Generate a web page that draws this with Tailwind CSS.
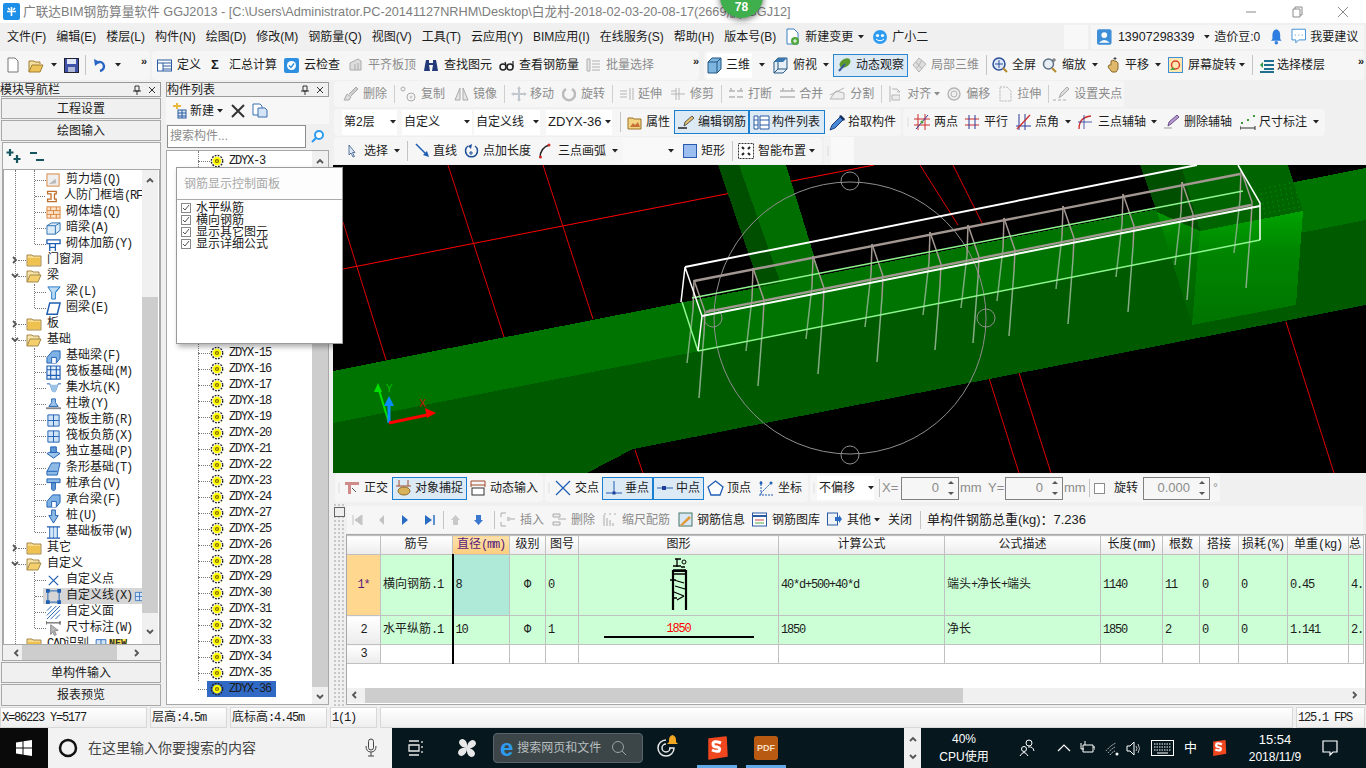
<!DOCTYPE html>
<html lang="zh-CN">
<head>
<meta charset="UTF-8">
<title>广联达BIM钢筋算量软件 GGJ2013</title>
<script src="https://cdn.jsdelivr.net/npm/@tailwindcss/browser@4"></script>
</head>
<body class="overflow-hidden">

<!-- shared icons -->
<svg class="absolute w-0 h-0">
  <symbol id="caret" viewBox="0 0 6 4"><path d="M0 0h6L3 3.5z" fill="#222"/></symbol>
  <symbol id="gear" viewBox="0 0 16 16"><circle cx="8" cy="8" r="6.500" fill="none" stroke="#222" stroke-width="1.600" stroke-dasharray="2 1.400"/><circle cx="8" cy="8" r="5" fill="#ff0"/><circle cx="8" cy="8" r="2.400" fill="#7a6a00"/><circle cx="8" cy="8" r="1" fill="#ff0"/></symbol>
  <symbol id="fold" viewBox="0 0 16 14"><path d="M1 3V2h5l1 1h8v10H1z" fill="#f6d98a" stroke="#a5894a"/><path d="M2 5h12v7H2z" fill="#efc14e"/></symbol>
  <symbol id="foldo" viewBox="0 0 16 14"><path d="M1 13V2h5l1 1h6v3" fill="#f6e3a8" stroke="#a5894a"/><path d="M1 13l3-7h11l-3 7z" fill="#f3cf6e" stroke="#a5894a"/></symbol>
  <symbol id="up" viewBox="0 0 10 10"><path d="M2 7l3-3 3 3" fill="none" stroke="#555" stroke-width="1.800"/></symbol>
  <symbol id="down" viewBox="0 0 10 10"><path d="M2 3l3 3 3-3" fill="none" stroke="#555" stroke-width="1.800"/></symbol>
  <symbol id="left" viewBox="0 0 10 10"><path d="M7 2L4 5l3 3" fill="none" stroke="#555" stroke-width="1.800"/></symbol>
  <symbol id="right" viewBox="0 0 10 10"><path d="M3 2l3 3-3 3" fill="none" stroke="#555" stroke-width="1.800"/></symbol>
  <symbol id="grip" viewBox="0 0 4 20"><path d="M1 1h2v2H1zM1 5h2v2H1zM1 9h2v2H1zM1 13h2v2H1zM1 17h2v2H1z" fill="#c4c4c4"/></symbol>
  <symbol id="spin" viewBox="0 0 10 20"><path d="M2 6l3-3 3 3z" fill="#555"/><path d="M2 14h6l-3 3z" fill="#555"/></symbol>
  <symbol id="blue" viewBox="0 0 16 16"><path d="M2 2h12v12H2z" fill="#cfe2f6" stroke="#1f5fb4"/><path d="M2 8h12M8 2v12" stroke="#1f5fb4"/></symbol>
  <g id="st"><path d="M0 0L-1 30" fill="none" stroke="#a39791" stroke-width="1.500"/><path d="M-1 30L-7 83" fill="none" stroke="#7cab7c" stroke-width="1.500"/><path d="M0 0L11 32L10 53" fill="none" stroke="#a39791" stroke-width="1.500"/><path d="M10 53L5 118" fill="none" stroke="#86ad86" stroke-width="1.500"/></g>
</svg>

<div class="relative w-[1366px] h-[768px] overflow-hidden bg-[#f0f0f0] text-[12px] leading-4 text-[#1c1c1c] font-['Liberation_Sans','Noto_Sans_CJK_SC',sans-serif]">

  <!-- title bar -->
  <div class="flex items-center h-[23px] bg-white pl-[3px]">
    <svg width="17" height="17" viewBox="0 0 17 17"><rect width="17" height="17" rx="2" fill="#1e8fe8"/><path d="M4 8.500h9M8.500 4v9M5 5l2 2M12 5l-2 2" stroke="#fff" stroke-width="1.600"/></svg>
    <span class="ml-[3px] whitespace-nowrap text-[12.7px] text-[#7d7d7d]">广联达BIM钢筋算量软件 GGJ2013 - [C:\Users\Administrator.PC-20141127NRHM\Desktop\白龙村-2018-02-03-20-08-17(2669版).GGJ12]</span>
    <div class="ml-auto flex items-center">
      <svg width="46" height="16" viewBox="0 0 46 16"><path d="M18 8h10" stroke="#8a8a8a"/></svg>
      <svg width="46" height="16" viewBox="0 0 46 16"><path d="M19 5h7v8h-7zM21 5V3h7v8h-2" fill="none" stroke="#8a8a8a"/></svg>
      <svg width="46" height="16" viewBox="0 0 46 16"><path d="M18 3l10 10M28 3L18 13" stroke="#8a8a8a"/></svg>
    </div>
  </div>
  <!-- badge over the title -->
  <div class="absolute left-[720px] top-[-25px] w-[43px] h-[43px] rounded-full bg-[#3fae4c] shadow-[0_2px_6px_rgba(0,0,0,0.55)] flex items-end justify-center pb-[3px] text-white font-bold text-[12px]">78</div>

  <!-- menu bar -->
  <div class="flex items-center h-[27px] whitespace-nowrap">
    <div class="flex items-center gap-[10px] pl-[7px]">
      <span>文件(F)</span><span>编辑(E)</span><span>楼层(L)</span><span>构件(N)</span><span>绘图(D)</span><span>修改(M)</span><span>钢筋量(Q)</span><span>视图(V)</span><span>工具(T)</span><span>云应用(Y)</span><span>BIM应用(I)</span><span>在线服务(S)</span><span>帮助(H)</span><span>版本号(B)</span>
    </div>
    <svg class="ml-[9px]" width="15" height="18" viewBox="0 0 15 18"><path d="M2 1h7l4 4v11H2z" fill="#fff" stroke="#3a7fc4"/><circle cx="10" cy="13" r="4" fill="#4fa83d"/><path d="M10 11v4M8 13h4" stroke="#fff"/></svg>
    <span class="ml-[5px]">新建变更</span>
    <svg class="ml-[5px]" width="6" height="4"><use href="#caret"/></svg>
    <svg class="ml-[8px]" width="16" height="16" viewBox="0 0 16 16"><circle cx="8" cy="8" r="7" fill="#2d9cf0"/><circle cx="5.500" cy="6.500" r="1.600" fill="#fff"/><circle cx="10.500" cy="6.500" r="1.600" fill="#fff"/><path d="M4 10q4 3.500 8 0" stroke="#fff" fill="none"/></svg>
    <span class="ml-[4px]">广小二</span>
    <div class="ml-[136px] w-[24px] h-[24px] bg-[#f8f8f8]"></div>
    <div class="flex items-center h-[24px] ml-[3px] pl-[6px] pr-[6px] gap-[6px] bg-[#f6f6f6] w-[273px]">
      <svg width="15" height="16" viewBox="0 0 15 16"><rect width="15" height="16" rx="2" fill="#3f8fd8"/><circle cx="7.500" cy="6" r="3" fill="#fff"/><path d="M2 14q5.500-6 11 0z" fill="#fff"/></svg>
      <span class="text-[12.500px]">13907298339</span>
      <svg class="ml-[4px]" width="6" height="4"><use href="#caret"/></svg>
      <span class="-ml-[2px]">造价豆:0</span>
      <svg class="ml-[4px]" width="13" height="17" viewBox="0 0 13 17"><path d="M6.500 1q-4 1-4 6v4L1 13h11l-1.500-2V7q0-5-4-6z" fill="#2e7fe0"/><circle cx="6.500" cy="15" r="1.800" fill="#2e7fe0"/></svg>
      <svg class="ml-[2px]" width="16" height="17" viewBox="0 0 16 17"><path d="M1 1h14v11H8l-3 3v-3H1z" fill="#fff" stroke="#3f8fd8"/><path d="M4 7h1M7.500 7h1M11 7h1" stroke="#3f8fd8"/></svg>
      <span class="-ml-[2px]">我要建议</span>
    </div>
  </div>

  <!-- main toolbar -->
  <div class="flex items-center h-[30px] whitespace-nowrap">
    <div class="flex items-center h-[29px] w-[150px] bg-[#f6f6f6] rounded-r-sm pl-[7px]">
      <svg width="12" height="16" viewBox="0 0 12 16"><path d="M1 1h7l3 3v11H1z" fill="#fff" stroke="#777"/></svg>
      <svg class="ml-[9px]" width="16" height="15" viewBox="0 0 16 15"><path d="M1 14V3h5l1 1h5v2" fill="#f3dfa0" stroke="#a07f30"/><path d="M1 14l3-7h11l-3 7z" fill="#eec35a" stroke="#a07f30"/></svg>
      <svg class="ml-[7px]" width="6" height="4"><use href="#caret"/></svg>
      <svg class="ml-[7px]" width="15" height="15" viewBox="0 0 15 15"><rect x=".5" y=".5" width="14" height="14" fill="#3d52a8" stroke="#223"/><rect x="3" y="1" width="9" height="5" fill="#dfe6f5"/><rect x="4" y="9" width="7" height="5" fill="#aeb8d8"/></svg>
      <i class="ml-[6px] w-px h-[20px] bg-[#c4c4c4]"></i>
      <svg class="ml-[7px]" width="13" height="15" viewBox="0 0 13 15"><path d="M3 5q7-3 8 3 0 4-4 5" fill="none" stroke="#2766c4" stroke-width="2.400"/><path d="M1 1l1 7 5-4z" fill="#2766c4"/></svg>
      <svg class="ml-[9px]" width="6" height="4"><use href="#caret"/></svg>
      <span class="ml-[20px] -mt-[8px] text-[11px] font-bold leading-none">»</span>
    </div>
    <div class="flex items-center h-[29px] w-[547px] ml-[2px] gap-[7px] bg-[#f6f6f6] rounded-sm pl-[5px]">
      <div class="flex items-center gap-[5px]"><svg width="15" height="15" viewBox="0 0 15 15"><rect x=".5" y="2" width="14" height="11" fill="#fff" stroke="#2a5aa0"/><path d="M1 5h13M6 5v8M6 8h8M6 11h8" stroke="#2a5aa0"/></svg><span>定义</span></div>
      <div class="flex items-center gap-[9px] ml-[3px]"><span class="font-bold text-[13px] w-[9px]">Σ</span><span>汇总计算</span></div>
      <div class="flex items-center gap-[5px]"><svg width="15" height="15" viewBox="0 0 15 15"><rect width="15" height="15" rx="2" fill="#2d8fe0"/><circle cx="7.500" cy="7.500" r="4.500" fill="#fff"/><path d="M5 7.500l2 2 3-4" fill="none" stroke="#2d8fe0" stroke-width="1.400"/></svg><span>云检查</span></div>
      <div class="flex items-center gap-[5px] text-[#8c8c8c] ml-[1px]"><svg width="15" height="16" viewBox="0 0 15 16"><path d="M2 6l8-4 3 2v9H2z" fill="#ddd" stroke="#aaa"/><path d="M7 7v6M10 6v7" stroke="#aaa"/></svg><span>平齐板顶</span></div>
      <div class="flex items-center gap-[5px]"><svg width="16" height="15" viewBox="0 0 16 15"><path d="M3 2h3v5l1 6H1l1-6zM10 2h3l1 5 1 6H9l1-6z" fill="#223a78"/><path d="M6 6h4" stroke="#223a78" stroke-width="2"/></svg><span>查找图元</span></div>
      <div class="flex items-center gap-[5px]"><svg width="15" height="15" viewBox="0 0 15 15"><circle cx="4" cy="9" r="3" fill="none" stroke="#222" stroke-width="1.500"/><circle cx="11" cy="9" r="3" fill="none" stroke="#222" stroke-width="1.500"/><path d="M6 4l1 3M14 3v6" stroke="#222" stroke-width="1.200"/></svg><span>查看钢筋量</span></div>
      <div class="flex items-center gap-[5px] text-[#8c8c8c]"><svg width="15" height="16" viewBox="0 0 15 16"><path d="M1 2h3v12H1zM6 4h8M6 7h8M6 10h8M6 13h8" fill="#e5e5e5" stroke="#b0b0b0"/></svg><span>批量选择</span></div>
      <span class="ml-[32px] -mt-[8px] text-[11px] font-bold leading-none">»</span>
    </div>
    <div class="flex items-center h-[29px] w-[660px] ml-[5px] bg-[#f6f6f6] rounded-sm pl-[3px]">
      <div class="flex items-center h-[25px] gap-[4px] bg-white pr-[2px]"><svg width="15" height="17" viewBox="0 0 15 17"><path d="M1 5l4-4h9v11l-4 4H1z" fill="#7cb6e0" stroke="#24557f"/><path d="M1 5h9v11M10 5l4-4" fill="none" stroke="#24557f"/></svg><span>三维</span></div>
      <svg class="ml-[7px]" width="6" height="4"><use href="#caret"/></svg>
      <svg class="ml-[8px]" width="15" height="17" viewBox="0 0 15 17"><path d="M1 5l4-4h9v11l-4 4H1z" fill="#e6eff7" stroke="#24557f"/><path d="M5 1v11h9M5 12l-4 4" fill="none" stroke="#24557f"/><path d="M1 5l4-4h9l-4 4z" fill="#3a78b0"/></svg>
      <span class="ml-[5px]">俯视</span>
      <svg class="ml-[6px]" width="6" height="4"><use href="#caret"/></svg>
      <div class="flex items-center h-[23px] w-[75px] ml-[4px] pl-[3px] gap-[4px] border border-[#2b86d3] bg-[#dceaf6]"><svg width="15" height="16" viewBox="0 0 15 16"><ellipse cx="8" cy="6" rx="6" ry="4" fill="#5c9a2e" transform="rotate(-35 8 6)"/><path d="M2 14L8 7" stroke="#3a5a9a" stroke-width="2"/></svg><span>动态观察</span></div>
      <div class="flex items-center gap-[4px] ml-[4px] text-[#8c8c8c]"><svg width="15" height="16" viewBox="0 0 15 16"><path d="M7 1l7 6-7 8-6-7z" fill="#ddd" stroke="#b5b5b5"/><path d="M4 5l6 7M10 3L5 11" stroke="#b5b5b5"/></svg><span>局部三维</span></div>
      <i class="ml-[7px] w-px h-[20px] bg-[#c4c4c4]"></i>
      <svg class="ml-[5px]" width="16" height="17" viewBox="0 0 16 17"><circle cx="7" cy="7" r="6" fill="#dfe8f7" stroke="#2a4f98" stroke-width="1.500"/><path d="M7 3v8M3 7h8" stroke="#2a4f98"/><path d="M11 11l4 4" stroke="#b58a2e" stroke-width="2"/></svg>
      <span class="ml-[4px]">全屏</span>
      <svg class="ml-[6px]" width="15" height="16" viewBox="0 0 15 16"><circle cx="6.500" cy="7" r="5" fill="#e8eef5" stroke="#5f7187" stroke-width="1.500"/><path d="M10 11l4 4" stroke="#b58a2e" stroke-width="2"/><path d="M12 1v4M10 3h4" stroke="#666"/></svg>
      <span class="ml-[5px]">缩放</span>
      <svg class="ml-[6px]" width="6" height="4"><use href="#caret"/></svg>
      <svg class="ml-[8px]" width="15" height="16" viewBox="0 0 15 16"><path d="M5 8V4l2-1 1 1 2 0 2 2v6l-2 3H6L2 10l1-2z" fill="#e0b86c" stroke="#8a6a2a"/><path d="M9 0v3M7.500 1.500h3" stroke="#444"/></svg>
      <span class="ml-[4px]">平移</span>
      <svg class="ml-[6px]" width="6" height="4"><use href="#caret"/></svg>
      <svg class="ml-[7px]" width="15" height="16" viewBox="0 0 15 16"><rect x=".5" y=".5" width="14" height="15" fill="#ffe7b0" stroke="#3f8fd8"/><circle cx="7.500" cy="8" r="4" fill="none" stroke="#d8432f" stroke-width="1.500"/><path d="M2 13l3-3 2 3z" fill="#4fa83d"/></svg>
      <span class="ml-[5px]">屏幕旋转</span>
      <svg class="ml-[3px]" width="6" height="4"><use href="#caret"/></svg>
      <i class="ml-[7px] w-px h-[20px] bg-[#c4c4c4]"></i>
      <svg class="ml-[6px]" width="16" height="15" viewBox="0 0 16 15"><path d="M5 3h10M5 7h10M5 11h10M1 14h14" stroke="#1f6f8f" stroke-width="2"/><path d="M1 7l3-3v6z" fill="#2d9a3f"/></svg>
      <span class="ml-[2px]">选择楼层</span>
      <span class="ml-[33px] -mt-[8px] text-[11px] font-bold leading-none">»</span>
    </div>
  </div>

  <!-- work area -->
  <div class="flex h-[627px]">

    <!-- module navigation -->
    <div class="w-[161px] pt-[2px] pl-[1px] flex flex-col shrink-0">
      <div class="flex items-center h-[15px] border-y border-[#9a9a9a] border-r pr-[3px] leading-none"><span class="-ml-[1px]">模块导航栏</span>
        <svg class="ml-auto" width="10" height="10" viewBox="0 0 10 10"><path d="M3 1h4v5H3zM1 6h8M5 6v4" fill="none" stroke="#333"/></svg>
        <svg class="ml-[5px]" width="10" height="10" viewBox="0 0 10 10"><path d="M2 2l6 6M8 2L2 8" stroke="#333"/></svg>
      </div>
      <div class="mt-[1px] h-[21px] flex items-center justify-center border border-[#a8a8a8]">工程设置</div>
      <div class="mt-[1px] h-[21px] flex items-center justify-center border border-[#a8a8a8]">绘图输入</div>
      <div class="mt-[1px] h-[519px] ml-[1px] flex flex-col border border-[#a8a8a8]">
        <div class="flex items-center h-[26px] pl-[3px] gap-[8px] bg-[#f7f7f7]">
          <svg width="16" height="14" viewBox="0 0 16 14"><path d="M4 0v7M0.500 3.500h7M11 6v8M7.500 10h7" stroke="#14555f" stroke-width="2.200"/></svg>
          <svg width="14" height="11" viewBox="0 0 14 11"><path d="M0 2h7M6 9h8" stroke="#14555f" stroke-width="2.200"/></svg>
        </div>
        <div class="flex-1 flex border border-[#a8a8a8] bg-white overflow-hidden">
          <div class="relative w-[138px] pt-[2px] overflow-hidden whitespace-nowrap font-['Liberation_Mono','Noto_Sans_CJK_SC',monospace] [&_b]:font-normal [&_b]:text-[12px] [&_b]:tracking-[-1.2px]">
            <i class="absolute left-[11px] top-0 h-full border-l border-dotted border-[#777]"></i>
            <i class="absolute left-[30px] top-0 h-[74px] border-l border-dotted border-[#777]"></i>
            <i class="absolute left-[30px] top-[114px] h-[24px] border-l border-dotted border-[#777]"></i>
            <i class="absolute left-[30px] top-[178px] h-[184px] border-l border-dotted border-[#777]"></i>
            <i class="absolute left-[30px] top-[402px] h-[56px] border-l border-dotted border-[#777]"></i>

            <div class="relative flex items-center h-4 pl-[31px]"><i class="w-[11px] border-t border-dotted border-[#777]"></i><svg width="15" height="15" viewBox="0 0 16 16"><rect x="1" y="1" width="13" height="13" fill="#eee" stroke="#d9833a"/><path d="M3 12l8-1-1-5z" fill="#b9b9b9"/></svg><span class="ml-[5px]">剪力墙<b>(Q)</b></span></div>
            <div class="relative flex items-center h-4 pl-[31px]"><i class="w-[11px] border-t border-dotted border-[#777]"></i><svg width="15" height="15" viewBox="0 0 16 16"><path d="M3 2h10v3h-2v6h2v3H3v-3h4V5H3z" fill="#fff" stroke="#c0702a" stroke-width="1.500"/></svg><span class="ml-[5px]">人防门框墙<b>(RF</b></span></div>
            <div class="relative flex items-center h-4 pl-[31px]"><i class="w-[11px] border-t border-dotted border-[#777]"></i><svg width="15" height="15" viewBox="0 0 16 16"><rect x="1" y="2" width="14" height="12" fill="#fbe3cc" stroke="#d9833a"/><path d="M1 6h14M1 10h14M5 2v4M11 2v4M8 6v4M5 10v4M11 10v4" stroke="#d9833a"/></svg><span class="ml-[5px]">砌体墙<b>(Q)</b></span></div>
            <div class="relative flex items-center h-4 pl-[31px]"><i class="w-[11px] border-t border-dotted border-[#777]"></i><svg width="15" height="15" viewBox="0 0 16 16"><path d="M1 5l5-3h9v8l-5 4H1z" fill="#dcecf8" stroke="#2a6fb0"/><path d="M1 5h9v9M10 5l5-3" fill="none" stroke="#2a6fb0"/></svg><span class="ml-[5px]">暗梁<b>(A)</b></span></div>
            <div class="relative flex items-center h-4 pl-[31px]"><i class="w-[11px] border-t border-dotted border-[#777]"></i><svg width="15" height="15" viewBox="0 0 16 16"><path d="M1 3h14v4H1zM4 7v8M10 7v8M4 11h6" fill="#fff" stroke="#1f5fb4" stroke-width="1.400"/></svg><span class="ml-[5px]">砌体加筋<b>(Y)</b></span></div>
            <div class="relative flex items-center h-4 pl-[14px]"><i class="w-[8px] border-t border-dotted border-[#777]"></i><svg width="16" height="14"><use href="#fold"/></svg><span class="ml-[5px]">门窗洞</span><svg class="absolute left-[6px] top-[3px]" width="10" height="10"><use href="#right"/></svg></div>
            <div class="relative flex items-center h-4 pl-[14px]"><i class="w-[8px] border-t border-dotted border-[#777]"></i><svg width="16" height="14"><use href="#foldo"/></svg><span class="ml-[5px]">梁</span><svg class="absolute left-[6px] top-[3px]" width="10" height="10"><use href="#down"/></svg></div>
            <div class="relative flex items-center h-4 pl-[31px]"><i class="w-[11px] border-t border-dotted border-[#777]"></i><svg width="15" height="15" viewBox="0 0 16 16"><path d="M2 2h13l-5 6v7H6V8z" fill="#bcdcf5" stroke="#1f78c4"/><path d="M10 8l5-6" stroke="#1f78c4"/></svg><span class="ml-[5px]">梁<b>(L)</b></span></div>
            <div class="relative flex items-center h-4 pl-[31px]"><i class="w-[11px] border-t border-dotted border-[#777]"></i><svg width="15" height="15" viewBox="0 0 16 16"><path d="M4 2h11l-3 12H1z" fill="#fff" stroke="#1f5fb4" stroke-width="1.600"/></svg><span class="ml-[5px]">圈梁<b>(E)</b></span></div>
            <div class="relative flex items-center h-4 pl-[14px]"><i class="w-[8px] border-t border-dotted border-[#777]"></i><svg width="16" height="14"><use href="#fold"/></svg><span class="ml-[5px]">板</span><svg class="absolute left-[6px] top-[3px]" width="10" height="10"><use href="#right"/></svg></div>
            <div class="relative flex items-center h-4 pl-[14px]"><i class="w-[8px] border-t border-dotted border-[#777]"></i><svg width="16" height="14"><use href="#foldo"/></svg><span class="ml-[5px]">基础</span><svg class="absolute left-[6px] top-[3px]" width="10" height="10"><use href="#down"/></svg></div>
            <div class="relative flex items-center h-4 pl-[31px]"><i class="w-[11px] border-t border-dotted border-[#777]"></i><svg width="15" height="15" viewBox="0 0 16 16"><path d="M1 15V9l6-7h8v8l-4 5z" fill="#7fb2e4" stroke="#1f5fb4"/><path d="M6 15V9h5v6" fill="#fff" stroke="#1f5fb4"/></svg><span class="ml-[5px]">基础梁<b>(F)</b></span></div>
            <div class="relative flex items-center h-4 pl-[31px]"><i class="w-[11px] border-t border-dotted border-[#777]"></i><svg width="15" height="15" viewBox="0 0 16 16"><path d="M1 1h14v14H1zM1 5h14M1 11h14M5 1v14M11 1v14" fill="#e5f0fb" stroke="#1f5fb4" stroke-width="1.200"/></svg><span class="ml-[5px]">筏板基础<b>(M)</b></span></div>
            <div class="relative flex items-center h-4 pl-[31px]"><i class="w-[11px] border-t border-dotted border-[#777]"></i><svg width="15" height="15" viewBox="0 0 16 16"><path d="M1 3h3l3 8h3l3-8h3" fill="none" stroke="#1f5fb4"/><path d="M4 4h9l-3 8H7z" fill="#9bc4e8"/></svg><span class="ml-[5px]">集水坑<b>(K)</b></span></div>
            <div class="relative flex items-center h-4 pl-[31px]"><i class="w-[11px] border-t border-dotted border-[#777]"></i><svg width="15" height="15" viewBox="0 0 16 16"><path d="M6 2h4v4l3 4H3l3-4z" fill="#9bc4e8" stroke="#1f5fb4"/><path d="M0 12h16" stroke="#888" stroke-width="2"/></svg><span class="ml-[5px]">柱墩<b>(Y)</b></span></div>
            <div class="relative flex items-center h-4 pl-[31px]"><i class="w-[11px] border-t border-dotted border-[#777]"></i><svg width="15" height="15"><use href="#blue"/></svg><span class="ml-[5px]">筏板主筋<b>(R)</b></span></div>
            <div class="relative flex items-center h-4 pl-[31px]"><i class="w-[11px] border-t border-dotted border-[#777]"></i><svg width="15" height="15"><use href="#blue"/></svg><span class="ml-[5px]">筏板负筋<b>(X)</b></span></div>
            <div class="relative flex items-center h-4 pl-[31px]"><i class="w-[11px] border-t border-dotted border-[#777]"></i><svg width="15" height="15" viewBox="0 0 16 16"><path d="M1 9l7-3 7 3-7 5z" fill="#9bc4e8" stroke="#1f5fb4"/><path d="M5 2h6v6H5z" fill="#5f98d4" stroke="#1f5fb4"/></svg><span class="ml-[5px]">独立基础<b>(P)</b></span></div>
            <div class="relative flex items-center h-4 pl-[31px]"><i class="w-[11px] border-t border-dotted border-[#777]"></i><svg width="15" height="15" viewBox="0 0 16 16"><path d="M1 15v-4l5-9h9l-3 13z" fill="#8dbbe6" stroke="#1f5fb4"/><path d="M1 11h11" stroke="#1f5fb4"/></svg><span class="ml-[5px]">条形基础<b>(T)</b></span></div>
            <div class="relative flex items-center h-4 pl-[31px]"><i class="w-[11px] border-t border-dotted border-[#777]"></i><svg width="15" height="15" viewBox="0 0 16 16"><path d="M1 2h14v4H1z" fill="#8dbbe6" stroke="#1f5fb4"/><path d="M6 6h4v7l-2 2-2-2z" fill="#5f98d4" stroke="#1f5fb4"/></svg><span class="ml-[5px]">桩承台<b>(V)</b></span></div>
            <div class="relative flex items-center h-4 pl-[31px]"><i class="w-[11px] border-t border-dotted border-[#777]"></i><svg width="15" height="15" viewBox="0 0 16 16"><path d="M1 15V9l6-7h8v8l-4 5z" fill="#7fb2e4" stroke="#1f5fb4"/><path d="M6 15V9h5v6" fill="#fff" stroke="#1f5fb4"/></svg><span class="ml-[5px]">承台梁<b>(F)</b></span></div>
            <div class="relative flex items-center h-4 pl-[31px]"><i class="w-[11px] border-t border-dotted border-[#777]"></i><svg width="15" height="15" viewBox="0 0 16 16"><path d="M6 1h4v6h3l-5 8-5-8h3z" fill="#8dbbe6" stroke="#1f5fb4"/></svg><span class="ml-[5px]">桩<b>(U)</b></span></div>
            <div class="relative flex items-center h-4 pl-[31px]"><i class="w-[11px] border-t border-dotted border-[#777]"></i><svg width="15" height="15" viewBox="0 0 16 16"><path d="M1 2h14M1 14h14M4 2v12M8 2v12M12 2v12" stroke="#1f5fb4" stroke-width="1.300"/><path d="M4 3h8v10H4z" fill="#bcdcf5" opacity=".6"/></svg><span class="ml-[5px]">基础板带<b>(W)</b></span></div>
            <div class="relative flex items-center h-4 pl-[14px]"><i class="w-[8px] border-t border-dotted border-[#777]"></i><svg width="16" height="14"><use href="#fold"/></svg><span class="ml-[5px]">其它</span><svg class="absolute left-[6px] top-[3px]" width="10" height="10"><use href="#right"/></svg></div>
            <div class="relative flex items-center h-4 pl-[14px]"><i class="w-[8px] border-t border-dotted border-[#777]"></i><svg width="16" height="14"><use href="#foldo"/></svg><span class="ml-[5px]">自定义</span><svg class="absolute left-[6px] top-[3px]" width="10" height="10"><use href="#down"/></svg></div>
            <div class="relative flex items-center h-4 pl-[31px]"><i class="w-[11px] border-t border-dotted border-[#777]"></i><svg width="15" height="15" viewBox="0 0 16 16"><path d="M3 3l10 10M13 3L3 13" stroke="#1f5fb4" stroke-width="1.300"/></svg><span class="ml-[5px]">自定义点</span></div>
            <div class="relative flex items-center h-4 pl-[31px]"><i class="w-[8px] border-t border-dotted border-[#777]"></i><div class="flex items-center flex-1 h-4 pl-[3px] bg-[#d6d6d6] overflow-hidden"><svg class="shrink-0" width="15" height="15" viewBox="0 0 16 16"><path d="M2 2h12v12H2z" fill="none" stroke="#1f5fb4"/><path d="M0 0h4v4H0zM12 0h4v4h-4zM0 12h4v4H0zM12 12h4v4h-4z" fill="#1f5fb4"/></svg><span class="ml-[5px]">自定义线<b>(X)</b></span><svg class="ml-[2px] shrink-0" width="11" height="13"><use href="#blue"/></svg></div></div>
            <div class="relative flex items-center h-4 pl-[31px]"><i class="w-[11px] border-t border-dotted border-[#777]"></i><svg width="15" height="15" viewBox="0 0 16 16"><path d="M1 6l5-5M1 11L11 1M1 15L15 1M5 15L15 5M10 15l5-5" stroke="#1f5fb4"/></svg><span class="ml-[5px]">自定义面</span></div>
            <div class="relative flex items-center h-4 pl-[31px]"><i class="w-[11px] border-t border-dotted border-[#777]"></i><svg width="15" height="15" viewBox="0 0 16 16"><path d="M0 2h15M0 0v4M15 0v4" stroke="#333"/><path d="M5 4l8 6-4 .5 2 4-2 1-2-4-2 3z" fill="#b8b8b8" stroke="#888"/></svg><span class="ml-[5px]">尺寸标注<b>(W)</b></span></div>
            <div class="relative flex items-center h-4 pl-[14px]"><i class="w-[8px] border-t border-dotted border-[#777]"></i><svg width="16" height="14"><use href="#fold"/></svg><span class="ml-[5px]"><b>CAD</b>识别</span><svg class="ml-[5px]" width="14" height="13"><use href="#blue"/></svg><span class="ml-[1px] bg-[#ffe84d] font-bold text-[10px] leading-none text-[#333]">NEW</span></div>
          </div>
          <!-- tree scrollbar -->
          <div class="w-[16px] relative bg-[#f0f0f0]">
            <svg class="mx-auto mt-[5px]" width="10" height="10"><use href="#up"/></svg>
            <div class="absolute left-0 top-[127px] w-full h-[316px] bg-[#cdcdcd]"></div>
            <svg class="absolute left-[3px] top-[457px]" width="10" height="10"><use href="#down"/></svg>
          </div>
        </div>
        <div class="h-[15px] relative bg-[#f0f0f0] mx-[1px]">
          <svg class="absolute left-[7px] top-[3px]" width="10" height="10"><use href="#left"/></svg>
          <div class="absolute left-[18px] top-0 w-[95px] h-full bg-[#cdcdcd]"></div>
          <svg class="absolute left-[128px] top-[3px]" width="10" height="10"><use href="#right"/></svg>
        </div>
      </div>
      <div class="mt-[1px] h-[21px] flex items-center justify-center border border-[#a8a8a8]">单构件输入</div>
      <div class="mt-[1px] h-[22px] flex items-center justify-center border border-[#a8a8a8]">报表预览</div>
    </div>

    <!-- component list -->
    <div class="w-[163px] ml-[5px] pt-[2px] flex flex-col shrink-0">
      <div class="flex items-center h-[15px] border-y border-x border-[#9a9a9a] pr-[3px] leading-none"><span>构件列表</span>
        <svg class="ml-auto" width="10" height="10" viewBox="0 0 10 10"><path d="M3 1h4v5H3zM1 6h8M5 6v4" fill="none" stroke="#333"/></svg>
        <svg class="ml-[5px]" width="10" height="10" viewBox="0 0 10 10"><path d="M2 2l6 6M8 2L2 8" stroke="#333"/></svg>
      </div>
      <div class="flex items-center h-[27px] bg-[#f7f7f7] pl-[5px]">
        <svg width="16" height="16" viewBox="0 0 16 16"><path d="M2 2h3V0h2v2h3v2H7v2H5V4H2z" fill="#e8b93c"/><rect x="7" y="7" width="8" height="8" fill="#dfe9f6" stroke="#2a5aa0"/><path d="M7 10h8M7 13h8M11 7v8" stroke="#2a5aa0"/></svg>
        <span class="ml-[3px]">新建</span>
        <svg class="ml-[3px]" width="6" height="4"><use href="#caret"/></svg>
        <svg class="ml-[8px]" width="14" height="14" viewBox="0 0 14 14"><path d="M1 1l12 12M13 1L1 13" stroke="#333" stroke-width="2"/></svg>
        <svg class="ml-[7px]" width="16" height="15" viewBox="0 0 16 15"><path d="M1 1h7l2 2v9H1z" fill="#fff" stroke="#3b6eb0"/><path d="M6 5h7l2 2v7H6z" fill="#d5e4f6" stroke="#3b6eb0"/></svg>
      </div>
      <div class="flex items-center h-[24px]">
        <div class="w-[139px] h-[23px] ml-[1px] flex items-center pl-[2px] bg-white border border-[#8d8d8d] text-[#8c8c8c] leading-none">搜索构件...</div>
        <svg class="ml-[5px]" width="14" height="14" viewBox="0 0 14 14"><circle cx="8" cy="6" r="4" fill="#fff" stroke="#2d9cf0" stroke-width="2"/><path d="M5 9l-4 4" stroke="#2d9cf0" stroke-width="2.200"/></svg>
      </div>
      <div class="flex-1 mt-[2px] flex border border-[#a8a8a8] bg-white overflow-hidden">
        <div class="relative w-[145px] pt-[2px] whitespace-nowrap text-[12px] tracking-[-1.2px] font-['Liberation_Mono',monospace]">
          <i class="absolute left-[31px] top-0 h-[530px] border-l border-dotted border-[#777]"></i>
          <div class="flex items-center h-4 pl-[31px]"><i class="w-[12px] border-t border-dotted border-[#777]"></i><svg width="14" height="14"><use href="#gear"/></svg><span class="ml-[5px]">ZDYX-3</span></div>
          <div class="h-[176px]"></div>
          <div class="flex items-center h-4 pl-[31px]"><i class="w-[12px] border-t border-dotted border-[#777]"></i><svg width="14" height="14"><use href="#gear"/></svg><span class="ml-[5px]">ZDYX-15</span></div>
          <div class="flex items-center h-4 pl-[31px]"><i class="w-[12px] border-t border-dotted border-[#777]"></i><svg width="14" height="14"><use href="#gear"/></svg><span class="ml-[5px]">ZDYX-16</span></div>
          <div class="flex items-center h-4 pl-[31px]"><i class="w-[12px] border-t border-dotted border-[#777]"></i><svg width="14" height="14"><use href="#gear"/></svg><span class="ml-[5px]">ZDYX-17</span></div>
          <div class="flex items-center h-4 pl-[31px]"><i class="w-[12px] border-t border-dotted border-[#777]"></i><svg width="14" height="14"><use href="#gear"/></svg><span class="ml-[5px]">ZDYX-18</span></div>
          <div class="flex items-center h-4 pl-[31px]"><i class="w-[12px] border-t border-dotted border-[#777]"></i><svg width="14" height="14"><use href="#gear"/></svg><span class="ml-[5px]">ZDYX-19</span></div>
          <div class="flex items-center h-4 pl-[31px]"><i class="w-[12px] border-t border-dotted border-[#777]"></i><svg width="14" height="14"><use href="#gear"/></svg><span class="ml-[5px]">ZDYX-20</span></div>
          <div class="flex items-center h-4 pl-[31px]"><i class="w-[12px] border-t border-dotted border-[#777]"></i><svg width="14" height="14"><use href="#gear"/></svg><span class="ml-[5px]">ZDYX-21</span></div>
          <div class="flex items-center h-4 pl-[31px]"><i class="w-[12px] border-t border-dotted border-[#777]"></i><svg width="14" height="14"><use href="#gear"/></svg><span class="ml-[5px]">ZDYX-22</span></div>
          <div class="flex items-center h-4 pl-[31px]"><i class="w-[12px] border-t border-dotted border-[#777]"></i><svg width="14" height="14"><use href="#gear"/></svg><span class="ml-[5px]">ZDYX-23</span></div>
          <div class="flex items-center h-4 pl-[31px]"><i class="w-[12px] border-t border-dotted border-[#777]"></i><svg width="14" height="14"><use href="#gear"/></svg><span class="ml-[5px]">ZDYX-24</span></div>
          <div class="flex items-center h-4 pl-[31px]"><i class="w-[12px] border-t border-dotted border-[#777]"></i><svg width="14" height="14"><use href="#gear"/></svg><span class="ml-[5px]">ZDYX-27</span></div>
          <div class="flex items-center h-4 pl-[31px]"><i class="w-[12px] border-t border-dotted border-[#777]"></i><svg width="14" height="14"><use href="#gear"/></svg><span class="ml-[5px]">ZDYX-25</span></div>
          <div class="flex items-center h-4 pl-[31px]"><i class="w-[12px] border-t border-dotted border-[#777]"></i><svg width="14" height="14"><use href="#gear"/></svg><span class="ml-[5px]">ZDYX-26</span></div>
          <div class="flex items-center h-4 pl-[31px]"><i class="w-[12px] border-t border-dotted border-[#777]"></i><svg width="14" height="14"><use href="#gear"/></svg><span class="ml-[5px]">ZDYX-28</span></div>
          <div class="flex items-center h-4 pl-[31px]"><i class="w-[12px] border-t border-dotted border-[#777]"></i><svg width="14" height="14"><use href="#gear"/></svg><span class="ml-[5px]">ZDYX-29</span></div>
          <div class="flex items-center h-4 pl-[31px]"><i class="w-[12px] border-t border-dotted border-[#777]"></i><svg width="14" height="14"><use href="#gear"/></svg><span class="ml-[5px]">ZDYX-30</span></div>
          <div class="flex items-center h-4 pl-[31px]"><i class="w-[12px] border-t border-dotted border-[#777]"></i><svg width="14" height="14"><use href="#gear"/></svg><span class="ml-[5px]">ZDYX-31</span></div>
          <div class="flex items-center h-4 pl-[31px]"><i class="w-[12px] border-t border-dotted border-[#777]"></i><svg width="14" height="14"><use href="#gear"/></svg><span class="ml-[5px]">ZDYX-32</span></div>
          <div class="flex items-center h-4 pl-[31px]"><i class="w-[12px] border-t border-dotted border-[#777]"></i><svg width="14" height="14"><use href="#gear"/></svg><span class="ml-[5px]">ZDYX-33</span></div>
          <div class="flex items-center h-4 pl-[31px]"><i class="w-[12px] border-t border-dotted border-[#777]"></i><svg width="14" height="14"><use href="#gear"/></svg><span class="ml-[5px]">ZDYX-34</span></div>
          <div class="flex items-center h-4 pl-[31px]"><i class="w-[12px] border-t border-dotted border-[#777]"></i><svg width="14" height="14"><use href="#gear"/></svg><span class="ml-[5px]">ZDYX-35</span></div>
          <div class="flex items-center h-4 pl-[31px]"><i class="w-[9px] border-t border-dotted border-[#777]"></i><div class="flex items-center w-[69px] h-4 pl-[3px] bg-[#316ac5]"><svg width="14" height="14"><use href="#gear"/></svg><span class="ml-[5px]">ZDYX-36</span></div></div>
        </div>
        <div class="w-[16px] relative bg-[#f0f0f0]">
          <svg class="mx-auto mt-[5px]" width="10" height="10"><use href="#up"/></svg>
          <div class="absolute left-0 top-[17px] w-full h-[519px] bg-[#cdcdcd]"></div>
          <svg class="absolute left-[3px] top-[541px]" width="10" height="10"><use href="#down"/></svg>
        </div>
      </div>
      <div class="h-[2px]"></div>
    </div>

    <!-- drawing side -->
    <div class="w-[1033px] ml-[4px] flex flex-col whitespace-nowrap">

      <!-- edit row -->
      <div class="flex items-center h-[28px]">
        <div class="flex items-center h-[26px] w-[790px] ml-[1px] bg-[#f6f6f6] rounded-sm pl-[8px] text-[#8c8c8c]">
          <svg width="17" height="16" viewBox="0 0 17 16"><path d="M2 14l3-6 4 3-2 3z" fill="#ddd" stroke="#aaa"/><path d="M7 8l7-7 2 2-7 7" fill="#ccc" stroke="#aaa"/></svg>
          <span class="ml-[4px]">删除</span>
          <i class="ml-[7px] w-px h-[18px] bg-[#cfcfcf]"></i>
          <svg class="ml-[5px]" width="16" height="16" viewBox="0 0 16 16"><circle cx="3" cy="3" r="2" fill="none" stroke="#aaa"/><circle cx="11" cy="11" r="4" fill="none" stroke="#aaa"/><circle cx="11" cy="11" r="1.500" fill="#ccc"/></svg>
          <span class="ml-[5px]">复制</span>
          <svg class="ml-[9px]" width="15" height="16" viewBox="0 0 15 16"><path d="M6 2v12H1zM9 2v12h5z" fill="#e6e6e6" stroke="#aaa"/></svg>
          <span class="ml-[4px]">镜像</span>
          <i class="ml-[7px] w-px h-[18px] bg-[#cfcfcf]"></i>
          <svg class="ml-[6px]" width="16" height="16" viewBox="0 0 16 16"><path d="M8 0l2 3H9v4h4V6l3 2-3 2V9H9v4h1l-2 3-2-3h1V9H3v1L0 8l3-2v1h4V3H6z" fill="#c2c8d0"/></svg>
          <span class="ml-[3px]">移动</span>
          <svg class="ml-[8px]" width="14" height="16" viewBox="0 0 14 16"><path d="M10 3A6 6 0 1 1 4 3" fill="none" stroke="#bbb" stroke-width="2.500"/></svg>
          <span class="ml-[5px]">旋转</span>
          <i class="ml-[7px] w-px h-[18px] bg-[#cfcfcf]"></i>
          <svg class="ml-[7px]" width="14" height="16" viewBox="0 0 14 16"><path d="M0 8h7M13 2v12M10 2v12M0 5h7M0 11h7" stroke="#b5b5b5"/></svg>
          <span class="ml-[4px]">延伸</span>
          <svg class="ml-[9px]" width="14" height="16" viewBox="0 0 14 16"><path d="M0 8h14M5 2v12M8 2v12M0 5h5" stroke="#b5b5b5"/></svg>
          <span class="ml-[5px]">修剪</span>
          <i class="ml-[7px] w-px h-[18px] bg-[#cfcfcf]"></i>
          <svg class="ml-[7px]" width="14" height="16" viewBox="0 0 14 16"><path d="M0 5h6M8 5h6M0 11h6M8 11h6M2 5V2M12 5V2" stroke="#b5b5b5" stroke-width="1.500"/></svg>
          <span class="ml-[5px]">打断</span>
          <svg class="ml-[8px]" width="15" height="16" viewBox="0 0 15 16"><path d="M0 5h15M0 11h15M3 5V2M12 5V2" stroke="#b5b5b5" stroke-width="1.500"/></svg>
          <span class="ml-[4px]">合并</span>
          <svg class="ml-[6px]" width="16" height="16" viewBox="0 0 16 16"><path d="M1 13L7 5l8 2v6zM1 9l14-7" fill="#eee" stroke="#b5b5b5"/></svg>
          <span class="ml-[5px]">分割</span>
          <i class="ml-[7px] w-px h-[18px] bg-[#cfcfcf]"></i>
          <svg class="ml-[7px]" width="11" height="16" viewBox="0 0 11 16"><path d="M1 0v16M3 3h5l3 3-3 0M3 9h8v5H3z" fill="#ececec" stroke="#b5b5b5"/></svg>
          <span class="ml-[7px]">对齐</span>
          <svg class="ml-[3px] opacity-50" width="6" height="4"><use href="#caret"/></svg>
          <svg class="ml-[7px]" width="14" height="16" viewBox="0 0 14 16"><circle cx="7" cy="8" r="6" fill="#eee" stroke="#b5b5b5" stroke-width="1.400"/><circle cx="7" cy="8" r="3" fill="none" stroke="#b5b5b5"/></svg>
          <span class="ml-[5px]">偏移</span>
          <svg class="ml-[8px]" width="15" height="16" viewBox="0 0 15 16"><path d="M2 1h7l4 4v10H2z" fill="#f5f5f5" stroke="#b5b5b5" stroke-dasharray="2 1"/></svg>
          <span class="ml-[4px]">拉伸</span>
          <i class="ml-[7px] w-px h-[18px] bg-[#cfcfcf]"></i>
          <svg class="ml-[4px]" width="16" height="16" viewBox="0 0 16 16"><path d="M0 14h3M5 14h3M10 14h3" stroke="#aaa"/><path d="M6 12l2-5 6-6 2 2-6 6z" fill="#ddd" stroke="#aaa"/></svg>
          <span class="ml-[5px]">设置夹点</span>
        </div>
      </div>

      <!-- layer and component row -->
      <div class="flex items-center h-[28px]">
        <div class="flex items-center h-[27px] w-[567px] ml-[1px] bg-[#f6f6f6] rounded-sm">
          <div class="flex items-center justify-between w-[55px] h-[25px] ml-[8px] pl-[2px] pr-[1px] bg-white"><span>第2层</span><svg width="6" height="4"><use href="#caret"/></svg></div>
          <div class="flex items-center justify-between w-[70px] h-[25px] ml-[5px] pl-[2px] pr-[2px] bg-white"><span>自定义</span><svg width="6" height="4"><use href="#caret"/></svg></div>
          <div class="flex items-center justify-between w-[66px] h-[25px] ml-[2px] pl-[2px] pr-[1px] bg-white"><span>自定义线</span><svg width="6" height="4"><use href="#caret"/></svg></div>
          <div class="flex items-center justify-between w-[66px] h-[25px] ml-[6px] pl-[2px] pr-[1px] bg-white"><span class="text-[13px]">ZDYX-36</span><svg width="6" height="4"><use href="#caret"/></svg></div>
          <i class="ml-[8px] w-px h-[20px] bg-[#c4c4c4]"></i>
          <svg class="ml-[6px]" width="15" height="15" viewBox="0 0 15 15"><path d="M1 14V3h5l1 1h7v10z" fill="#f3d480" stroke="#9a7428"/><path d="M3 12l3-4 2 2 3-3 2 5z" fill="#c9703a"/></svg>
          <span class="ml-[4px]">属性</span>
          <div class="flex items-center gap-[2px] w-[75px] h-[24px] ml-[4px] pl-[3px] border border-[#1a7fd0] bg-[#dceaf6]"><svg width="18" height="15" viewBox="0 0 18 15"><path d="M0 13h9" stroke="#222" stroke-width="1.500"/><path d="M6 11l1-4 7-6 2 2-7 6z" fill="#e8c56a" stroke="#555"/></svg><span>编辑钢筋</span></div>
          <div class="flex items-center gap-[2px] w-[76px] h-[24px] pl-[3px] border border-[#1a7fd0] bg-[#dceaf6]"><svg width="17" height="15" viewBox="0 0 17 15"><path d="M1 1h4v13H1zM7 1h9v13H7zM1 5h4M1 10h4M7 5h9M7 10h9" fill="#fff" stroke="#2a5aa0"/></svg><span>构件列表</span></div>
          <svg class="ml-[4px]" width="17" height="17" viewBox="0 0 17 17"><path d="M1 16l2-5 8-8 3 3-8 8z" fill="#4a88d4" stroke="#1a3f80"/><path d="M10 2l2-1 4 4-1 2z" fill="#1a2f60"/></svg>
          <span class="ml-[2px]">拾取构件</span>
        </div>
        <div class="flex items-center h-[27px] w-[422px] ml-[2px] bg-[#f6f6f6] rounded-sm pl-[4px]">
          <svg width="2" height="20"><use href="#grip"/></svg>
          <svg class="ml-[5px]" width="16" height="16" viewBox="0 0 16 16"><path d="M4 0v16M11 0v16M0 11h16M0 5h16" stroke="#cc2d2d"/><path d="M2 15L14 1" stroke="#2a3a9a"/><circle cx="8" cy="8" r="1.500" fill="#4a9a3a"/></svg>
          <span class="ml-[4px]">两点</span>
          <svg class="ml-[7px]" width="14" height="16" viewBox="0 0 14 16"><path d="M0 5h14M0 11h14" stroke="#cc2d2d"/><path d="M4 1v14M10 1v14" stroke="#2a3a9a"/></svg>
          <span class="ml-[5px]">平行</span>
          <svg class="ml-[8px]" width="15" height="16" viewBox="0 0 15 16"><path d="M3 0v16M0 12h15M9 0v16" stroke="#2a3a9a"/><path d="M1 15L14 1" stroke="#cc2d2d" stroke-width="1.300"/></svg>
          <span class="ml-[4px]">点角</span>
          <svg class="ml-[6px]" width="6" height="4"><use href="#caret"/></svg>
          <svg class="ml-[7px]" width="15" height="16" viewBox="0 0 15 16"><path d="M1 15Q1 3 13 2" fill="none" stroke="#cc2d2d" stroke-width="1.300"/><path d="M6 1v14M0 8h14" stroke="#2a3a9a" stroke-width=".8"/></svg>
          <span class="ml-[5px]">三点辅轴</span>
          <svg class="ml-[5px]" width="6" height="4"><use href="#caret"/></svg>
          <svg class="ml-[7px]" width="16" height="16" viewBox="0 0 16 16"><path d="M0 14h8" stroke="#999"/><path d="M4 12l1-4 8-7 2 2-8 7z" fill="#b79ad0" stroke="#6a4f8a"/></svg>
          <span class="ml-[4px]">删除辅轴</span>
          <svg class="ml-[8px]" width="16" height="16" viewBox="0 0 16 16"><path d="M0 12v4M15 12v4M0 14h15" stroke="#333"/><path d="M1 8h2v2H1zM7 5h2v2H7zM13 1h2v2h-2z" fill="#3a9a3a"/></svg>
          <span class="ml-[3px]">尺寸标注</span>
          <svg class="ml-[6px]" width="6" height="4"><use href="#caret"/></svg>
        </div>
      </div>

      <!-- draw row -->
      <div class="flex items-center h-[29px]">
        <div class="flex items-center h-[27px] w-[488px] ml-[1px] bg-[#f6f6f6] rounded-sm">
          <svg class="ml-[14px]" width="8" height="14" viewBox="0 0 8 14"><path d="M1 1v10l2-2 2 4 1.500-.5-2-4H7z" fill="#dce6f5" stroke="#3a5a8a" stroke-width=".8"/></svg>
          <span class="ml-[8px]">选择</span>
          <svg class="ml-[6px]" width="6" height="4"><use href="#caret"/></svg>
          <i class="ml-[7px] w-px h-[20px] bg-[#c4c4c4]"></i>
          <svg class="ml-[7px]" width="15" height="15" viewBox="0 0 15 15"><path d="M1 1l11 11" stroke="#1f5fb4" stroke-width="1.500"/><path d="M14 14l-6-2 4-4z" fill="#1f5fb4"/></svg>
          <span class="ml-[3px]">直线</span>
          <svg class="ml-[7px]" width="15" height="16" viewBox="0 0 15 16"><path d="M4 3a6 6 0 1 0 7 0" fill="none" stroke="#1f4f9a" stroke-width="1.500"/><path d="M8 1L4 3l3 3z" fill="#1f4f9a"/><path d="M7 8v4M5 10h4" stroke="#1f4f9a"/></svg>
          <span class="ml-[4px]">点加长度</span>
          <svg class="ml-[8px]" width="12" height="16" viewBox="0 0 12 16"><path d="M1 15Q1 5 10 2" fill="none" stroke="#222" stroke-width="1.500"/><circle cx="10" cy="2" r="1.500" fill="#cc2d2d"/><circle cx="1.500" cy="14" r="1.500" fill="#cc2d2d"/></svg>
          <span class="ml-[7px]">三点画弧</span>
          <svg class="ml-[6px]" width="6" height="4"><use href="#caret"/></svg>
          <div class="flex items-center justify-end w-[57px] h-[25px] ml-[5px] pr-[6px] bg-[#f9f9f9]"><svg width="6" height="4"><use href="#caret"/></svg></div>
          <svg class="ml-[3px]" width="14" height="14" viewBox="0 0 14 14"><rect x=".5" y=".5" width="13" height="13" fill="#9cbdf0" stroke="#2a5ab0"/></svg>
          <span class="ml-[4px]">矩形</span>
          <i class="ml-[7px] w-px h-[20px] bg-[#c4c4c4]"></i>
          <svg class="ml-[5px]" width="16" height="16" viewBox="0 0 16 16"><rect x=".5" y=".5" width="15" height="15" fill="#fff" stroke="#333" stroke-dasharray="2 1"/><path d="M4 4l2 2M12 4l-2 2M4 12l2-2M12 12l-2-2" stroke="#222" stroke-width="2"/></svg>
          <span class="ml-[4px]">智能布置</span>
          <svg class="ml-[3px]" width="6" height="4"><use href="#caret"/></svg>
        </div>
        <div class="flex items-center h-[27px] w-[30px] ml-[2px] bg-[#f3f3f3] pl-[3px]"><svg width="2" height="20"><use href="#grip"/></svg><div class="ml-[2px] w-[23px] h-[27px] bg-[#f9f9f9]"></div></div>
      </div>

      <!-- 3D view -->
      <svg class="h-[308px] bg-black shrink-0" width="1033" height="308" viewBox="0 0 1033 308">
        <defs>
          <linearGradient id="bright" x1="0" y1="0" x2="0" y2="1"><stop offset="0" stop-color="#00a300"/><stop offset=".35" stop-color="#008600"/><stop offset="1" stop-color="#007400"/></linearGradient>
          <linearGradient id="wedge" x1="0" y1="0" x2="0" y2="1"><stop offset="0" stop-color="#009400"/><stop offset=".45" stop-color="#006f00"/><stop offset="1" stop-color="#005f00"/></linearGradient>
          <pattern id="dots" width="5" height="5" patternUnits="userSpaceOnUse" patternTransform="rotate(-11)"><rect width="1" height="1" fill="#00a000"/></pattern>
        </defs>
        <g stroke="#e00000" stroke-width="1" fill="none">
          <path d="M10 104L541 0" stroke="#ff0000"/>
          <path d="M115 0L171 172M210 0L260 154M10 57L53 195M587 0L625 60M620 0L650 60M302 285L310 308M656 213L686 308M686 208L718 308M953 157L1001 308"/>
        </g>
        <g shape-rendering="crispEdges">
          <polygon points="385,0 406,0 450,125 428,125" fill="#004f00"/>
          <polygon points="406,0 453,0 487,110 450,125" fill="#006e00"/>
          <polygon points="0,206 1033,3 1033,55 0,258" fill="#007400"/>
          <polygon points="0,258 1033,55 1033,140 300,284 254,308 0,308" fill="#005a00"/>
          <polygon points="807,0 848,0 867,66 824,47" fill="#004f00"/>
          <polygon points="848,0 955,0 960,15 970,46 867,66" fill="#006400"/>
          <polygon points="920,26 960,15 970,46 930,54" fill="url(#dots)"/>
          <polygon points="867,66 970,46 963,140 859,160" fill="url(#bright)"/>
          <polygon points="824,47 867,66 859,160" fill="url(#wedge)"/>
        </g>
        <g fill="none" stroke="#8f8f8f" stroke-width="1">
          <circle cx="517" cy="153" r="136"/>
          <circle cx="517" cy="16" r="9"/><circle cx="517" cy="290" r="9"/><circle cx="380" cy="153" r="9"/><circle cx="653" cy="153" r="9"/>
        </g>
        <g fill="none">
          <use href="#st" x="361" y="115"/><use href="#st" x="420" y="103"/><use href="#st" x="480" y="91"/><use href="#st" x="539" y="79"/><use href="#st" x="597" y="67"/><use href="#st" x="635" y="60"/><use href="#st" x="671" y="53"/><use href="#st" x="730" y="41"/><use href="#st" x="790" y="29"/><use href="#st" x="849" y="17"/><use href="#st" x="908" y="5"/>
          <path d="M361 116L907 9M373 147L918 40" stroke="#a39791" stroke-width="2.400"/>
          <path d="M359 133L910 26M365 186L927 75M349 137L365 186" stroke="#8ff58f" stroke-width="1.500"/>
          <path d="M352 102L864 0M369 151L927 41" stroke="#fff" stroke-width="2"/>
          <path d="M352 102L348 137M352 102L369 151L365 186M905 0L927 38L927 75" stroke="#fff" stroke-width="1.500"/>
        </g>
        <!-- axis marker -->
        <path d="M56 258L46 225" stroke="#00e000" stroke-width="2"/><path d="M45 218l-4 9h8z" fill="#00e000"/>
        <path d="M56 258V240" stroke="#0a8cff" stroke-width="3"/><path d="M56 231l-5 10h10z" fill="#0a8cff"/>
        <path d="M56 258L94 250" stroke="#ff0000" stroke-width="3"/><path d="M103 248l-11-5 2 10z" fill="#ff0000"/>
        <text x="53" y="227" font-size="10" fill="#00c000" font-family="Liberation Sans">Y</text>
        <text x="86" y="242" font-size="10" fill="#d00000" font-family="Liberation Sans">X</text>
      </svg>

      <!-- snap row -->
      <div class="flex items-center h-[30px]">
        <div class="flex items-center h-[28px] w-[208px] ml-[2px] bg-[#f6f6f6] rounded-sm">
          <svg class="ml-[3px]" width="2" height="20"><use href="#grip"/></svg>
          <svg class="ml-[4px]" width="16" height="16" viewBox="0 0 16 16"><path d="M1 2h14v3h-8v9H4V5H1z" fill="#cf8a8a"/><path d="M8 8l4 4" stroke="#555"/></svg>
          <span class="ml-[4px]">正交</span>
          <div class="flex items-center gap-[4px] w-[75px] h-[23px] ml-[4px] pl-[3px] border border-[#1a7fd0] bg-[#dceaf6]"><svg width="15" height="16" viewBox="0 0 15 16"><ellipse cx="8" cy="11" rx="6" ry="4" fill="#d9b25c" stroke="#8a6a2a"/><path d="M3 0v6M12 0v6M0 6h15" stroke="#a04a2a"/></svg><span>对象捕捉</span></div>
          <svg class="ml-[3px]" width="16" height="16" viewBox="0 0 16 16"><path d="M1 1h14M1 1v6M15 1v6M1 5h14" fill="none" stroke="#a04a2a"/><rect x="2" y="8" width="12" height="7" fill="#fff" stroke="#333"/></svg>
          <span class="ml-[4px]">动态输入</span>
        </div>
        <div class="flex items-center h-[28px] w-[263px] ml-[2px] bg-[#f6f6f6] rounded-sm">
          <svg class="ml-[3px]" width="2" height="20"><use href="#grip"/></svg>
          <svg class="ml-[5px]" width="16" height="16" viewBox="0 0 16 16"><path d="M1 1l14 14M15 1L1 15" stroke="#1f5fb4" stroke-width="1.300"/></svg>
          <span class="ml-[4px]">交点</span>
          <div class="flex items-center gap-[3px] w-[51px] h-[23px] ml-[3px] pl-[3px] border border-[#1a7fd0] bg-[#dceaf6]"><svg width="16" height="16" viewBox="0 0 16 16"><path d="M8 1v12M0 13h16" stroke="#1f5fb4"/><rect x="6.500" y="11.500" width="3" height="3" fill="#1f3f9a"/></svg><span>垂点</span></div>
          <div class="flex items-center gap-[3px] w-[51px] h-[23px] pl-[3px] border border-[#1a7fd0] bg-[#dceaf6]"><svg width="16" height="16" viewBox="0 0 16 16"><path d="M0 8h16" stroke="#1f5fb4"/><rect x="5" y="6" width="4" height="4" fill="#1f3f9a"/></svg><span>中点</span></div>
          <svg class="ml-[3px]" width="17" height="16" viewBox="0 0 17 16"><path d="M8.500 1L16 7l-3 8H4L1 7z" fill="#fff" stroke="#1f5fb4" stroke-width="1.300"/></svg>
          <span class="ml-[3px]">顶点</span>
          <svg class="ml-[7px]" width="16" height="16" viewBox="0 0 16 16"><path d="M1 15h14M3 1v14M3 13l10-10" stroke="#1f5fb4" stroke-dasharray="2 1"/><circle cx="3" cy="3" r="1.500" fill="#1f5fb4"/><circle cx="13" cy="3" r="1.500" fill="#1f5fb4"/></svg>
          <span class="ml-[4px]">坐标</span>
        </div>
        <div class="flex items-center h-[28px] w-[410px] ml-[2px] bg-[#f6f6f6] rounded-sm">
          <svg class="ml-[3px]" width="2" height="20"><use href="#grip"/></svg>
          <div class="flex items-center w-[57px] h-[24px] ml-[2px] pl-[2px] bg-white"><span>不偏移</span><svg class="ml-[13px]" width="6" height="4"><use href="#caret"/></svg></div>
          <i class="ml-[5px] w-px h-[18px] bg-[#c4c4c4]"></i>
          <span class="ml-[2px] w-[19px] text-[#8c8c8c] text-[13px]">X=</span>
          <div class="flex items-center justify-end w-[58px] h-[23px] border border-[#808080] text-[#8c8c8c] text-[13px] pr-[2px]"><span>0</span><svg class="ml-[7px]" width="10" height="20"><use href="#spin"/></svg></div>
          <span class="ml-[1px] text-[#8c8c8c] text-[13px] w-[28px]">mm</span>
          <span class="w-[17px] text-[#8c8c8c] text-[13px]">Y=</span>
          <div class="flex items-center justify-end w-[58px] h-[23px] border border-[#808080] text-[#8c8c8c] text-[13px] pr-[2px]"><span>0</span><svg class="ml-[7px]" width="10" height="20"><use href="#spin"/></svg></div>
          <span class="ml-[1px] text-[#8c8c8c] text-[13px] w-[25px]">mm</span>
          <i class="w-px h-[18px] bg-[#c4c4c4]"></i>
          <i class="ml-[4px] w-[11px] h-[11px] border border-[#8c8c8c] bg-white"></i>
          <span class="ml-[9px]">旋转</span>
          <div class="flex items-center justify-end w-[67px] h-[23px] ml-[5px] border border-[#808080] text-[#8c8c8c] text-[13px] pr-[2px]"><span>0.000</span><svg class="ml-[7px]" width="10" height="20"><use href="#spin"/></svg></div>
          <span class="ml-[3px] text-[#8c8c8c]">°</span>
        </div>
      </div>

      <!-- rebar panel -->
      <div class="flex h-[204px]">
        <div class="w-[13px] pt-[4px] pl-[1px] shrink-0 bg-[radial-gradient(#c8c8c8_1px,transparent_1.2px)] bg-[length:4px_4px]">
          <div class="w-[11px] h-[10px] border border-[#666] bg-[#eee]"></div>
        </div>
        <div class="w-[1020px] flex flex-col">
          <div class="flex items-center h-[27px] mt-[3px] bg-[#f6f6f6] ml-[1px] w-[1016px] pl-[5px]">
            <svg width="11" height="12" viewBox="0 0 11 12"><path d="M1 1v10M10 1v10L3 6z" fill="#c4c4c4" stroke="#c4c4c4"/></svg>
            <svg class="ml-[15px]" width="7" height="12" viewBox="0 0 7 12"><path d="M6 1v10L1 6z" fill="#c4c4c4"/></svg>
            <svg class="ml-[16px]" width="8" height="12" viewBox="0 0 8 12"><path d="M1 1v10l6-5z" fill="#2a6cc4"/></svg>
            <svg class="ml-[15px]" width="11" height="12" viewBox="0 0 11 12"><path d="M1 1v10l7-5z" fill="#2a6cc4"/><path d="M10 1v10" stroke="#2a6cc4" stroke-width="1.500"/></svg>
            <i class="ml-[8px] w-px h-[18px] bg-[#c4c4c4]"></i>
            <svg class="ml-[6px]" width="11" height="12" viewBox="0 0 11 12"><path d="M5.500 1L10 6H8v5H3V6H1z" fill="#c9c9c9"/></svg>
            <svg class="ml-[12px]" width="11" height="12" viewBox="0 0 11 12"><path d="M5.500 11L10 6H8V1H3v5H1z" fill="#3a78d0"/></svg>
            <i class="ml-[10px] w-px h-[18px] bg-[#c4c4c4]"></i>
            <div class="flex items-center text-[#8c8c8c]">
              <svg class="ml-[5px]" width="16" height="15" viewBox="0 0 16 15"><path d="M1 1h5M1 1v4M1 10v4h5M8 7h7" fill="none" stroke="#aaa"/><rect x="7" y="5" width="3" height="4" fill="#ccc"/></svg>
              <span class="ml-[4px]">插入</span>
              <svg class="ml-[8px]" width="15" height="15" viewBox="0 0 15 15"><path d="M1 2h7v3H1zM1 10h7v3H1zM6 7h8" fill="#eee" stroke="#aaa"/></svg>
              <span class="ml-[4px]">删除</span>
              <svg class="ml-[8px]" width="14" height="15" viewBox="0 0 14 15"><path d="M1 14V3M4 14V6M7 14V8M10 14v-3M1 2h2M6 2h2M11 2h2" stroke="#aaa"/></svg>
              <span class="ml-[5px]">缩尺配筋</span>
            </div>
            <svg class="ml-[8px]" width="15" height="15" viewBox="0 0 15 15"><rect x="1" y="1" width="13" height="13" fill="#d9e6f6" stroke="#476"/><path d="M2 13l9-9 2 2-9 8z" fill="#e09a3a"/></svg>
            <span class="ml-[4px]">钢筋信息</span>
            <svg class="ml-[7px]" width="15" height="15" viewBox="0 0 15 15"><rect x=".5" y="1" width="14" height="13" fill="#fff" stroke="#2a5aa0"/><path d="M1 4h13" stroke="#2a5aa0" stroke-width="2"/><path d="M3 8h9" stroke="#c44"/><path d="M3 11h9" stroke="#4a4"/></svg>
            <span class="ml-[5px]">钢筋图库</span>
            <svg class="ml-[7px]" width="15" height="15" viewBox="0 0 15 15"><rect x=".5" y="1" width="10" height="12" fill="#eef3fa" stroke="#2a5aa0"/><path d="M8 5h4V3l3 4-3 4V9H8z" fill="#2a6cc4"/></svg>
            <span class="ml-[5px]">其他</span>
            <svg class="ml-[3px]" width="6" height="4"><use href="#caret"/></svg>
            <span class="ml-[8px]">关闭</span>
            <i class="ml-[8px] w-px h-[18px] bg-[#c4c4c4]"></i>
            <span class="ml-[6px] text-[13px]">单构件钢筋总重(kg)：7.236</span>
          </div>
          <div class="flex-1 mt-[1px] mb-[2px] flex flex-col border border-[#a8a8a8] bg-white overflow-hidden">
            <div class="flex-1 overflow-hidden">
              <table class="table-fixed w-[1017px] -ml-px border-collapse font-['Liberation_Mono','Noto_Sans_CJK_SC',monospace] [&_b]:font-normal [&_b]:text-[12px] [&_b]:tracking-[-1.2px] [&_td]:border [&_td]:border-[#c0c0c0] [&_td]:px-[2px] [&_th]:border [&_th]:border-[#c0c0c0] [&_th]:font-normal [&_th]:bg-gradient-to-b [&_th]:from-white [&_th]:to-[#ececec]">
                <colgroup>
                  <col class="w-[34px]"><col class="w-[72px]"><col class="w-[57px]"><col class="w-[36px]"><col class="w-[33px]"><col class="w-[200px]"><col class="w-[166px]"><col class="w-[156px]"><col class="w-[62px]"><col class="w-[37px]"><col class="w-[39px]"><col class="w-[49px]"><col class="w-[61px]"><col class="w-[15px]">
                </colgroup>
                <tr class="h-[19px]">
                  <th></th><th>筋号</th><th class="!from-[#ffe2ab] !to-[#fbcd7c] text-[#5a1a7a]">直径<b>(mm)</b></th><th>级别</th><th>图号</th><th>图形</th><th>计算公式</th><th>公式描述</th><th>长度<b>(mm)</b></th><th>根数</th><th>搭接</th><th>损耗<b>(%)</b></th><th>单重<b>(kg)</b></th><th class="text-left">总</th>
                </tr>
                <tr class="h-[61px] bg-[#ccffd6]">
                  <td class="bg-[#ffd78f] text-center text-[#5a1a7a]"><b>1*</b></td><td>横向钢筋<b>.1</b></td><td class="bg-[#afe9d8] !border-l-2 !border-l-black"><b>8</b></td><td class="text-center">Φ</td><td><b>0</b></td>
                  <td>
                    <svg class="mx-auto" width="20" height="54" viewBox="0 0 20 54"><path d="M4 52V13h13v39" fill="none" stroke="#000" stroke-width="2.200"/><path d="M4 12h13M4 16h13M1 22h6M5 22l10 3M6 28l10 3M5 34l10 4M15 38l-7 4M5 40h3M8 1v8M6 1h6M4 8h8M12 9h4" stroke="#000" stroke-width="1.300" fill="none"/><circle cx="15" cy="4" r="2" fill="none" stroke="#000"/></svg>
                  </td>
                  <td><b>40*d+500+40*d</b></td><td>端头<b>+</b>净长<b>+</b>端头</td><td><b>1140</b></td><td><b>11</b></td><td><b>0</b></td><td><b>0</b></td><td><b>0.45</b></td><td><b>4.</b></td>
                </tr>
                <tr class="h-[29px] bg-[#ccffd6]">
                  <td class="bg-gradient-to-b from-white to-[#ececec] text-center"><b>2</b></td><td>水平纵筋<b>.1</b></td><td class="!border-l-2 !border-l-black"><b>10</b></td><td class="text-center">Φ</td><td><b>1</b></td>
                  <td><div class="relative flex flex-col items-center"><span class="text-[#ff0000] text-[12px] tracking-[-1.2px] leading-[13px]">1850</span><i class="w-[150px] h-[2px] bg-black"></i></div></td>
                  <td><b>1850</b></td><td>净长</td><td><b>1850</b></td><td><b>2</b></td><td><b>0</b></td><td><b>0</b></td><td><b>1.141</b></td><td><b>2.</b></td>
                </tr>
                <tr class="h-[19px]">
                  <td class="bg-gradient-to-b from-white to-[#ececec] text-center"><b>3</b></td><td></td><td class="!border-l-2 !border-l-black"></td><td></td><td></td><td></td><td></td><td></td><td></td><td></td><td></td><td></td><td></td><td></td>
                </tr>
              </table>
            </div>
            <div class="relative h-[15px] bg-[#f0f0f0] mb-[1px]">
              <svg class="absolute left-[2px] top-[2px]" width="10" height="10"><use href="#left"/></svg>
              <div class="absolute left-[18px] top-0 w-[598px] h-full bg-[#cdcdcd]"></div>
              <svg class="absolute right-[5px] top-[2px]" width="10" height="10"><use href="#right"/></svg>
            </div>
          </div>
        </div>
      </div>
    </div>
  </div>

  <!-- rebar display popup over the list -->
  <div class="absolute left-[176px] top-[167px] w-[167px] h-[177px] bg-[#fdfdfd] border border-[#9a9a9a] shadow-[2px_3px_5px_rgba(0,0,0,0.3)] flex flex-col">
    <div class="h-[31px] pl-[7px] pt-[8px] text-[#a8a8a8]">钢筋显示控制面板</div>
    <div class="flex-1 border-t border-[#aaa] pl-[4px] pt-[2px] leading-[12px] bg-white">
      <div class="flex items-center h-[12px] gap-[5px]"><svg width="10" height="10" viewBox="0 0 10 10"><rect x=".5" y=".5" width="9" height="9" fill="#fff" stroke="#888"/><path d="M2 5l2 2 4-5" fill="none" stroke="#555"/></svg><span>水平纵筋</span></div>
      <div class="flex items-center h-[12px] gap-[5px]"><svg width="10" height="10" viewBox="0 0 10 10"><rect x=".5" y=".5" width="9" height="9" fill="#fff" stroke="#888"/><path d="M2 5l2 2 4-5" fill="none" stroke="#555"/></svg><span>横向钢筋</span></div>
      <div class="flex items-center h-[12px] gap-[5px]"><svg width="10" height="10" viewBox="0 0 10 10"><rect x=".5" y=".5" width="9" height="9" fill="#fff" stroke="#888"/><path d="M2 5l2 2 4-5" fill="none" stroke="#555"/></svg><span>显示其它图元</span></div>
      <div class="flex items-center h-[12px] gap-[5px]"><svg width="10" height="10" viewBox="0 0 10 10"><rect x=".5" y=".5" width="9" height="9" fill="#fff" stroke="#888"/><path d="M2 5l2 2 4-5" fill="none" stroke="#555"/></svg><span>显示详细公式</span></div>
    </div>
  </div>

  <!-- status bar -->
  <div class="flex h-[21px] gap-[3px] whitespace-nowrap font-['Liberation_Mono','Noto_Sans_CJK_SC',monospace] [&_b]:font-normal [&_b]:text-[12px] [&_b]:tracking-[-1.2px] [&>div]:flex [&>div]:items-center [&>div]:border [&>div]:border-[#d8d8d8] [&>div]:bg-gradient-to-b [&>div]:from-white [&>div]:to-[#eeeeee] [&>div]:pl-[1px]">
    <div class="w-[147px]"><b>X=86223 Y=5177</b></div>
    <div class="w-[77px]">层高<b>:4.5m</b></div>
    <div class="w-[97px]">底标高<b>:4.45m</b></div>
    <div class="w-[47px]"><b>1(1)</b></div>
    <div class="w-[913px]"></div>
    <div class="w-[69px]"><b>125.1 FPS</b></div>
  </div>

  <!-- windows taskbar -->
  <div class="flex items-center h-[40px] bg-[#06181e] text-white whitespace-nowrap">
    <div class="flex items-center justify-center w-[48px] h-full bg-[#0a0a0a]">
      <svg width="16" height="16" viewBox="0 0 16 16"><path d="M0 2.500l6.500-1v6H0zM7.500 1.300L16 0v7.500H7.500zM0 8.500h6.500v6L0 13.500zM7.500 8.500H16V16l-8.500-1.300z" fill="#fff"/></svg>
    </div>
    <div class="flex items-center w-[344px] h-full bg-[#f2f2f2] text-[#444] text-[14px]">
      <svg class="ml-[10px]" width="20" height="20" viewBox="0 0 20 20"><circle cx="10" cy="10" r="8" fill="none" stroke="#111" stroke-width="2.500"/></svg>
      <span class="ml-[10px]">在这里输入你要搜索的内容</span>
      <svg class="ml-[108px]" width="14" height="20" viewBox="0 0 14 20"><rect x="4.500" y="1" width="5" height="11" rx="2.500" fill="none" stroke="#444"/><path d="M2 8q0 6 5 6t5-6M7 14v4M4 18h6" fill="none" stroke="#444"/></svg>
    </div>
    <svg class="ml-[16px]" width="16" height="16" viewBox="0 0 16 16"><path d="M1 1h10M1 15h10M1 5h10v6H1zM14 1v2M14 6v2M14 11v2" fill="none" stroke="#e8e8e8" stroke-width="1.300"/></svg>
    <svg class="ml-[32px]" width="22" height="22" viewBox="0 0 22 22"><path d="M11 11Q5 11 3 6q0-4 4-4 5 2 4 9zM11 11q6 0 8 5 0 4-4 4-5-2-4-9zM11 11q0-6 5-8 4 0 4 4-2 5-9 4zM11 11q0 6-5 8-4 0-4-4 2-5 9-4z" fill="#e8e8e8"/></svg>
    <div class="flex items-center w-[150px] h-[30px] ml-[15px] bg-[#3c4648] border border-[#5b6466] rounded-sm text-[#b9bfc0]">
      <span class="ml-[6px] text-[#2d9cf0] text-[24px] leading-none font-bold">e</span>
      <span class="ml-[4px]">搜索网页和文件</span>
      <svg class="ml-[10px]" width="16" height="16" viewBox="0 0 16 16"><circle cx="7" cy="7" r="5.500" fill="none" stroke="#9aa2a4"/><path d="M11 11l4 4" stroke="#9aa2a4"/></svg>
    </div>
    <div class="relative ml-[13px]">
      <svg width="20" height="20" viewBox="0 0 20 20"><path d="M10 2a8 8 0 1 0 8 8h-5M10 6a4 4 0 1 0 4 4" fill="none" stroke="#e8e8e8" stroke-width="1.500"/></svg>
      <svg class="absolute left-[10px] -top-[4px]" width="13" height="13" viewBox="0 0 13 13"><path d="M6.500 1q-3.500 1-3.500 5v2l-2 2h11l-2-2V6q0-4-3.500-5z" fill="#f2a723"/></svg>
    </div>
    <div class="relative flex justify-center w-[40px] ml-[21px] h-full items-center">
      <svg width="24" height="24" viewBox="0 0 22 24"><path d="M3 3l17-2 1 19-18 3z" fill="#f0471f" stroke="#f0471f" stroke-width="1.500" stroke-linejoin="round"/><path d="M15 7q-8-3-8 1 0 3 4 3 4 1 2 4-3 1-7-1" fill="none" stroke="#fff" stroke-width="3"/></svg>
      <i class="absolute left-0 bottom-0 w-full h-[3px] bg-[#63a9e8]"></i>
    </div>
    <div class="relative flex justify-center w-[40px] ml-[9px] h-full items-center">
      <div class="flex items-center justify-center w-[24px] h-[24px] rounded-[3px] bg-[#b85a12] text-[9px] font-bold text-[#f5dfc0] leading-none">PDF</div>
      <i class="absolute left-0 bottom-0 w-full h-[3px] bg-[#63a9e8]"></i>
    </div>
    <div class="ml-[118px] flex flex-col items-center justify-between w-[17px] h-full py-[6px] bg-[#f0f0f0]">
      <svg width="10" height="10"><use href="#up"/></svg>
      <svg width="10" height="10"><use href="#down"/></svg>
    </div>
    <div class="flex flex-col items-center w-[86px] leading-[17px] gap-[1px]"><span>40%</span><span>CPU使用</span></div>
    <svg class="ml-[12px]" width="16" height="18" viewBox="0 0 16 18"><circle cx="10" cy="4" r="3" fill="none" stroke="#fff"/><circle cx="5" cy="10" r="2.500" fill="none" stroke="#fff"/><path d="M1 17q4-7 8 0M9 8q5-1 6 4" fill="none" stroke="#fff"/></svg>
    <svg class="ml-[22px]" width="14" height="10" viewBox="0 0 14 10"><path d="M1 8l6-6 6 6" fill="none" stroke="#fff" stroke-width="1.200"/></svg>
    <svg class="ml-[8px]" width="16" height="14" viewBox="0 0 16 14"><path d="M4 4h10v7H4zM14 6h2v3M6 0v4M2 2v6h3" fill="none" stroke="#fff"/></svg>
    <svg class="ml-[10px]" width="15" height="15" viewBox="0 0 15 15"><path d="M1 10q5-6 10-8M3 12q3-4 7-6M5 14q2-3 5-4" fill="none" stroke="#d8d8d8" stroke-dasharray="1.500 1"/><circle cx="12" cy="13" r="1.500" fill="#fff"/></svg>
    <svg class="ml-[6px]" width="15" height="15" viewBox="0 0 15 15"><path d="M1 5h3l4-4v13l-4-4H1z" fill="none" stroke="#fff"/><path d="M10 5q2 2.500 0 5M12 3q3 4.500 0 9" fill="none" stroke="#bbb"/></svg>
    <svg class="ml-[10px]" width="23" height="16" viewBox="0 0 23 16"><rect x=".5" y=".5" width="22" height="15" fill="none" stroke="#fff"/><path d="M3 4h17M3 7h17M3 10h17" stroke="#fff" stroke-dasharray="1.500 1"/><path d="M6 13h11" stroke="#fff"/></svg>
    <span class="ml-[10px] text-[13px]">中</span>
    <svg class="ml-[14px]" width="16" height="18" viewBox="0 0 22 24"><path d="M3 3l17-2 1 19-18 3z" fill="#f0471f"/><path d="M15 7q-8-3-8 1 0 3 4 3 4 1 2 4-3 1-7-1" fill="none" stroke="#fff" stroke-width="3"/></svg>
    <div class="flex flex-col items-center w-[84px] ml-[6px] leading-[17px] gap-[1px] text-[13px]"><span>15:54</span><span class="text-[12px]">2018/11/9</span></div>
    <svg class="ml-[5px]" width="16" height="17" viewBox="0 0 16 17"><path d="M1 1h14v11h-4l-3 3v-3H1z" fill="none" stroke="#fff" stroke-width="1.200"/></svg>
  </div>
</div>
</body>
</html>
